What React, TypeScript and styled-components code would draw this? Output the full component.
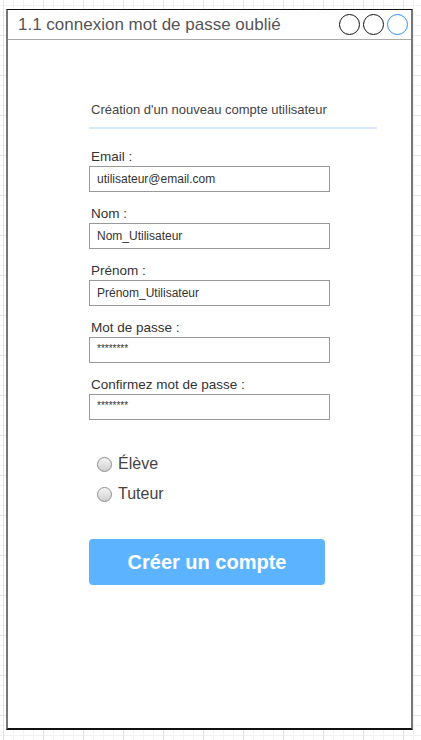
import styled, { createGlobalStyle } from 'styled-components';

const GlobalStyle = createGlobalStyle`
  html, body {
    margin: 0;
    padding: 0;
  }
  body {
    width: 421px;
    height: 740px;
    overflow: hidden;
    font-family: "Liberation Sans", Arial, sans-serif;
    background-color: #ffffff;
    background-image:
      linear-gradient(to right, #e4e4e4 1px, transparent 1px),
      linear-gradient(to bottom, #e4e4e4 1px, transparent 1px),
      linear-gradient(to right, #f2f2f2 1px, transparent 1px),
      linear-gradient(to bottom, #f2f2f2 1px, transparent 1px);
    background-size: 40px 40px, 40px 40px, 10px 10px, 10px 10px;
    background-position: 3px 0, 0 -5px, 3px 0, 0 -5px;
  }
`;

const fields = [
  { label: 'Email :', value: 'utilisateur@email.com', secret: false },
  { label: 'Nom :', value: 'Nom_Utilisateur', secret: false },
  { label: 'Prénom :', value: 'Prénom_Utilisateur', secret: false },
  { label: 'Mot de passe :', value: '********', secret: true },
  { label: 'Confirmez mot de passe :', value: '********', secret: true },
];

const roles = ['Élève', 'Tuteur'];

function App() {
  return (
    <>
      <GlobalStyle />
      <Frame>
        <TitleBar>
          <Title>1.1 connexion mot de passe oublié</Title>
          <Controls>
            <Dot />
            <Dot />
            <Dot $active />
          </Controls>
        </TitleBar>
        <Form>
          <Heading>Création d'un nouveau compte utilisateur</Heading>
          <Fields>
            {fields.map((f) => (
              <Field key={f.label}>
                <Label>{f.label}</Label>
                <Input $secret={f.secret}>{f.value}</Input>
              </Field>
            ))}
          </Fields>
          <Roles>
            {roles.map((r) => (
              <Role key={r}>
                <Radio />
                {r}
              </Role>
            ))}
          </Roles>
          <Submit>Créer un compte</Submit>
        </Form>
      </Frame>
    </>
  );
}

const Frame = styled.div`
  box-sizing: border-box;
  margin: 9px 0 0 6px;
  width: 407px;
  height: 721px;
  background: #ffffff;
  border-top: 1px solid #111;
  border-bottom: 2px solid #111;
  border-left: 2px solid #777;
  border-right: 2px solid #777;
  display: flex;
  flex-direction: column;
`;

const TitleBar = styled.div`
  height: 29px;
  border-bottom: 1px solid #aaa;
  display: flex;
  align-items: center;
  justify-content: space-between;
  padding: 0 3px 0 10px;
`;

const Title = styled.div`
  font-size: 17px;
  color: #555;
`;

const Controls = styled.div`
  display: flex;
  gap: 3px;
`;

const Dot = styled.div<{ $active?: boolean }>`
  box-sizing: border-box;
  width: 21px;
  height: 21px;
  border-radius: 50%;
  border: 1px solid ${(p) => (p.$active ? '#2e8fff' : '#111')};
`;

const Form = styled.div`
  padding: 62px 0 0 81px;
  display: flex;
  flex-direction: column;
`;

const Heading = styled.div`
  width: 288px;
  box-sizing: border-box;
  padding: 0 0 10px 2px;
  font-size: 13px;
  color: #444;
  border-bottom: 2px solid #d6eaff;
`;

const Fields = styled.div`
  margin-top: 20px;
  display: flex;
  flex-direction: column;
  gap: 14px;
`;

const Field = styled.div`
  display: flex;
  flex-direction: column;
  gap: 1px;
`;

const Label = styled.div`
  padding-left: 2px;
  font-size: 13.5px;
  line-height: 16px;
  color: #333;
`;

const Input = styled.div<{ $secret: boolean }>`
  box-sizing: border-box;
  width: 241px;
  height: 26px;
  border: 1px solid #999;
  padding: ${(p) => (p.$secret ? '0 7px 4px' : '0 7px')};
  display: flex;
  align-items: center;
  font-size: ${(p) => (p.$secret ? '10px' : '12px')};
  color: #333;
`;

const Roles = styled.div`
  margin-top: 34px;
  padding-left: 8px;
  display: flex;
  flex-direction: column;
  gap: 10px;
`;

const Role = styled.label`
  display: flex;
  align-items: center;
  gap: 6px;
  font-size: 16px;
  line-height: 20px;
  color: #444;
`;

const Radio = styled.span`
  box-sizing: border-box;
  width: 15px;
  height: 15px;
  border-radius: 50%;
  border: 1px solid #8e8e8e;
  background: linear-gradient(to bottom, #f4f4f4, #cfcfcf);
`;

const Submit = styled.button`
  margin-top: 35px;
  width: 236px;
  height: 46px;
  border: none;
  border-radius: 4px;
  background: #5cb3ff;
  color: #ffffff;
  font-family: "Liberation Sans", Arial, sans-serif;
  font-weight: bold;
  font-size: 20px;
  cursor: pointer;
`;

export default App;
